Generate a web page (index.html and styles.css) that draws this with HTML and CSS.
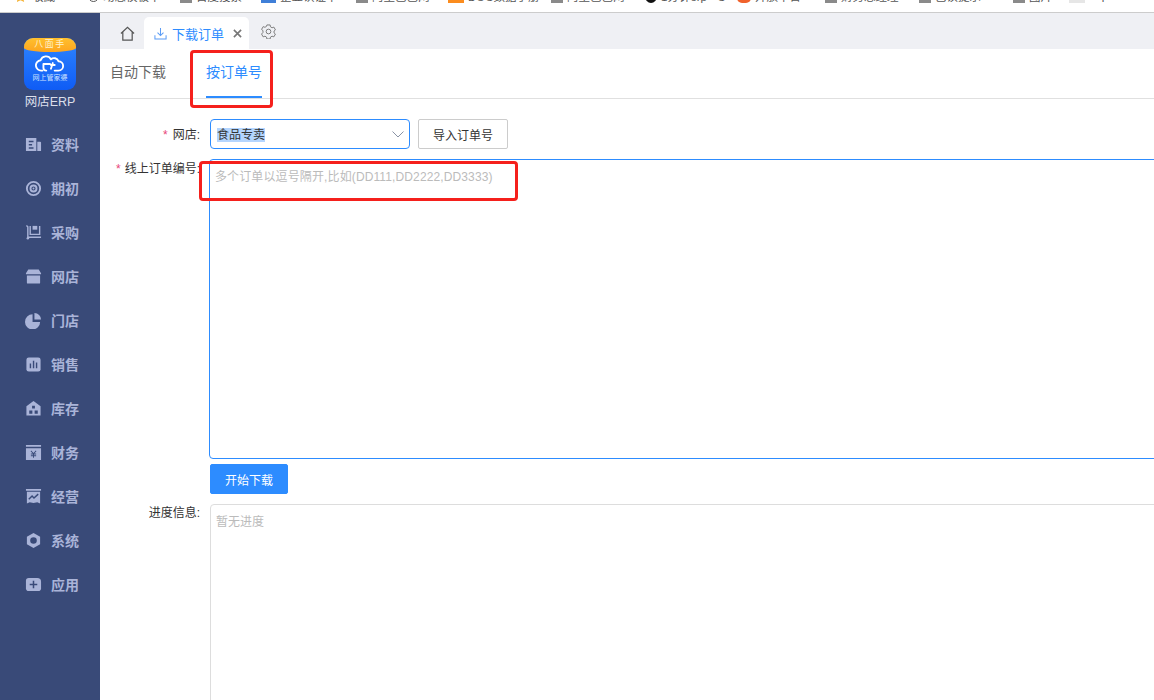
FILE: index.html
```html
<!DOCTYPE html>
<html lang="zh-CN">
<head>
<meta charset="utf-8">
<title>下载订单</title>
<link rel="stylesheet" href="styles.css">
</head>
<body>
<div class="bookmarks">
  <div class="bm"><svg class="bm-ico" viewBox="0 0 12 12"><path class="star" d="M6 0 8 4.500l4 .5-3 3 1 4-4-2-4 2 1-4-3-3 4-.5z"/></svg><span>收藏</span></div>
  <div class="bm"><span class="bm-ring"></span><span>动态模板中</span></div>
  <div class="bm"><span class="bm-box"></span><span>百度搜索</span></div>
  <div class="bm"><span class="bm-box blue"></span><span>企业认证中</span></div>
  <div class="bm"><span class="bm-box"></span><span>阿里巴巴网</span></div>
  <div class="bm"><span class="bm-box orange"></span><span>DOC数据手册</span></div>
  <div class="bm"><span class="bm-box"></span><span>阿里巴巴网</span></div>
  <div class="bm"><span class="bm-box black"></span><span>1分钟erp - C</span></div>
  <div class="bm"><span class="bm-box red"></span><span>开放平台</span></div>
  <div class="bm"><span class="bm-box"></span><span>财务总经理</span></div>
  <div class="bm"><span class="bm-box"></span><span>已读提示</span></div>
  <div class="bm"><span class="bm-box"></span><span>图片</span></div>
  <div class="bm"><span class="bm-box pale"></span><span>https://ss</span></div>
</div>
<div class="app">
  <aside class="sidebar">
    <div class="logo">
      <div class="logo-band">八面手</div>
      <svg class="logo-cloud" viewBox="0 0 32 18"><path d="M8 16H7a5.500 5.500 0 0 1-1-11 6 6 0 0 1 11-1 5 5 0 0 1 8 2 5 5 0 0 1 0 10h-4"/><path d="M9 9h7M9 9v4a3 3 0 0 0 3 3M19 8l-2 6M17 10l4 0"/></svg>
      <div class="logo-name">网上管家婆</div>
    </div>
    <div class="brand">网店ERP</div>
    <nav class="menu">
      <a class="menu-item"><svg class="mi" viewBox="0 0 18 18"><path d="M1 2h11v14H1z M13 6h3a1 1 0 0 1 1 1v9h-4z"/><path class="cut" d="M4 5h5v1.500H4zM4 8.500h3.500V10H4zM4 12h5v1.500H4z"/></svg><span>资料</span></a>
      <a class="menu-item"><svg class="mi" viewBox="0 0 18 18"><circle class="ln" cx="9" cy="9" r="7"/><circle class="ln" cx="9" cy="9" r="3.200"/><circle cx="9" cy="9" r="1"/></svg><span>期初</span></a>
      <a class="menu-item"><svg class="mi" viewBox="0 0 18 18"><path class="ln1" d="M1.500 1.500 3 3v11h14M5.500 2v9h10V2"/><path d="M8 2h5v4H8z"/><circle cx="3" cy="15" r="1.300"/></svg><span>采购</span></a>
      <a class="menu-item"><svg class="mi" viewBox="0 0 18 18"><path d="M3.500 1.500h11l2.500 4v1H1v-1zM2 8h14v7.500a1 1 0 0 1-1 1H3a1 1 0 0 1-1-1z"/></svg><span>网店</span></a>
      <a class="menu-item"><svg class="mi" viewBox="0 0 18 18"><path d="M8 2.500v8h8A8 8 0 1 1 8 2.500z"/><path d="M10 1a7 7 0 0 1 7 7h-7z"/></svg><span>门店</span></a>
      <a class="menu-item"><svg class="mi" viewBox="0 0 18 18"><rect x="1.500" y="1.500" width="15" height="15" rx="2.500"/><path class="cut" d="M5 8h1.500v5H5zM8.300 5h1.500v8H8.300zM11.500 7h1.500v6h-1.500z"/></svg><span>销售</span></a>
      <a class="menu-item"><svg class="mi" viewBox="0 0 18 18"><path d="M9 1 16.500 6.500v10h-15v-10z"/><path class="cut" d="M7.500 6h3v3h-3zM4.500 11h3.300v3.500H4.500zM10.200 11h3.300v3.500h-3.300z"/></svg><span>库存</span></a>
      <a class="menu-item"><svg class="mi" viewBox="0 0 18 18"><path d="M1 1h16v2H1zM1 4.500h16V17H1z"/><path class="cut" d="M6.500 7 9 9.500 11.500 7l.6.6L9.800 10h2v1h-2.300v1h2.300v1H9.500v1.500h-1V13H6.200v-1h2.300v-1H6.200v-1h2L5.900 7.600z"/></svg><span>财务</span></a>
      <a class="menu-item"><svg class="mi" viewBox="0 0 18 18"><path d="M1 1h16v2H1zM2 4h14v12.500L13 15l-4 1-4-1-3 1.500z"/><path class="cutln" d="M4 12l3.500-3.500 2 2L14 6.500"/></svg><span>经营</span></a>
      <a class="menu-item"><svg class="mi" viewBox="0 0 18 18"><path class="hex" fill-rule="evenodd" d="M9 1 16 5v8l-7 4-7-4V5zM9 5.500a3.500 3.500 0 1 0 0 7 3.500 3.500 0 0 0 0-7z"/></svg><span>系统</span></a>
      <a class="menu-item"><svg class="mi" viewBox="0 0 18 18"><path d="M4 2h9a4 4 0 0 1 4 4v7a3 3 0 0 1-3 3H4a3 3 0 0 1-3-3V5a3 3 0 0 1 3-3z"/><path class="cut" d="M8.200 5h1.600v3.200H13v1.600H9.800V13H8.200V9.800H5V8.200h3.200z"/></svg><span>应用</span></a>
    </nav>
  </aside>
  <main class="main">
    <div class="tabbar">
      <svg class="home" viewBox="0 0 16 16"><path d="M1 8 8 1.500 15 8M3 6.500V15h10V6.500"/></svg>
      <div class="tab">
        <svg class="tab-ico" viewBox="0 0 14 14"><path d="M7 1v8M3.800 6 7 9.200 10.200 6M1 9v4h12V9"/></svg>
        <span>下载订单</span>
        <svg class="tab-close" viewBox="0 0 10 10"><path d="M1 1l8 8M9 1 1 9"/></svg>
      </div>
      <svg class="gear" viewBox="0 0 16 16"><path d="M6.300 1h3.400l.4 2 1.700 1 1.900-.7 1.700 3-1.500 1.200v2l1.500 1.200-1.700 3-1.900-.7-1.700 1-.4 2H6.300l-.4-2-1.700-1-1.900.7-1.700-3L2.100 9V7L.6 5.800l1.700-3 1.900.7 1.700-1z"/><circle cx="8" cy="8" r="2.500"/></svg>
    </div>
    <div class="subtabs">
      <div class="subtab">自动下载</div>
      <div class="subtab active">按订单号</div>
    </div>
    <form class="form">
      <div class="row row-shop">
        <label class="label center"><i>*</i>网店:</label>
        <div class="select"><span class="selected">食品专卖</span>
          <svg class="chev" viewBox="0 0 12 7"><path d="M.5.500 6 6 11.500.5"/></svg></div>
        <button type="button" class="btn">导入订单号</button>
      </div>
      <div class="row row-orders">
        <label class="label"><i>*</i>线上订单编号:</label>
        <textarea class="orders" placeholder="多个订单以逗号隔开,比如(DD111,DD2222,DD3333)"></textarea>
      </div>
      <div class="row row-start">
        <span class="label"></span>
        <button type="button" class="btn primary">开始下载</button>
      </div>
      <div class="row">
        <label class="label progress-label">进度信息:</label>
        <div class="progress">暂无进度</div>
      </div>
    </form>
    <div class="mark mark-tab"></div>
    <div class="mark mark-field"></div>
  </main>
</div>
</body>
</html>
```
FILE: styles.css
```css
* { box-sizing: border-box; }
html, body { margin: 0; height: 700px; overflow: hidden; background: #fff; }
body { font-family: "Liberation Sans", "Noto Sans CJK SC", sans-serif; font-size: 12px; color: #333; display: flex; flex-direction: column; }

.bookmarks { height: 13px; flex: none; overflow: hidden; border-bottom: 1px solid #ccc; padding-left: 15px; display: grid; grid-template-columns: 73px 92px 81px 95px 92px 103px 94px 92px 88px 94px 94px 56px 85px; white-space: nowrap; }
.bm { display: flex; align-items: center; gap: 4px; height: 16px; margin-top: -12px; font-size: 11.500px; color: #555; overflow: visible; }
.bm-ico { width: 11px; height: 11px; overflow: visible; flex: none; margin-right: 2px; }
.star { fill: #f5b335; }
.bm-ring { width: 11px; height: 11px; border: 1.500px solid #555; border-radius: 50%; flex: none; margin-top: 1px; }
.bm-box { width: 12px; height: 14px; background: #8a8a8a; flex: none; }
.bm-box.blue { width: 15px; background: #3f7fd8; }
.bm-box.orange { width: 16px; background: #fb8c1e; }
.bm-box.black { background: #111; border-radius: 50%; }
.bm-box.red { width: 14px; background: #f0622c; border-radius: 5px; }
.bm-box.pale { width: 16px; background: #e6e6e6; }

.app { flex: 1; display: flex; min-height: 0; }

.sidebar { width: 100px; flex: none; background: #394a78; padding-top: 25px; display: flex; flex-direction: column; align-items: center; }
.logo { width: 52px; height: 52px; border-radius: 9px; overflow: hidden; background: linear-gradient(#2f86ff, #0f5cf5); display: flex; flex-direction: column; align-items: center; }
.logo-band { width: 52px; height: 14px; flex: none; background: linear-gradient(#ffc02e, #fda51f); border-radius: 0 0 50% 50% / 0 0 4px 4px; color: #fff2cf; font-size: 9px; line-height: 13px; letter-spacing: 1.500px; text-align: center; }
.logo-cloud { width: 30px; height: 18px; margin-top: 3px; flex: none; fill: none; stroke: #fff; stroke-width: 2; stroke-linecap: round; stroke-linejoin: round; }
.logo-name { font-size: 7px; line-height: 10px; margin-top: 0; color: #cfe3ff; white-space: nowrap; }
.brand { margin-top: 4px; line-height: 16px; font-size: 12.500px; color: #dcdfea; }

.menu { width: 100%; margin-top: 12px; display: flex; flex-direction: column; }
.menu-item { height: 44px; padding-left: 25px; display: flex; align-items: center; gap: 9px; font-size: 14px; font-weight: 700; color: #aab4d8; }
.mi { width: 17px; height: 17px; flex: none; fill: #aab4d8; }
.mi .cut { fill: #394a78; }
.mi .ln { fill: none; stroke: #aab4d8; stroke-width: 2; }
.mi .ln1 { fill: none; stroke: #aab4d8; stroke-width: 1.500; }
.mi .cutln { fill: none; stroke: #394a78; stroke-width: 1.500; }

.main { flex: 1; min-width: 0; position: relative; overflow: hidden; }

.tabbar { height: 36px; background: #eff0f4; padding: 4px 0 0 20px; display: flex; align-items: flex-start; }
.home { width: 15px; height: 15px; margin: 9px 9px 0 0; fill: none; stroke: #555; stroke-width: 1.300; flex: none; }
.tab { width: 105px; height: 32px; background: #fff; border-radius: 5px 5px 0 0; padding-left: 10px; display: flex; align-items: center; font-size: 13px; color: #2d8cff; }
.tab-ico { width: 13px; height: 13px; margin-right: 5px; fill: none; stroke: #5b9cf5; stroke-width: 1.100; flex: none; }
.tab-close { width: 9px; height: 9px; margin-left: 9px; fill: none; stroke: #777; stroke-width: 1.800; flex: none; }
.gear { width: 15px; height: 15px; margin: 7px 0 0 12px; fill: none; stroke: #777; stroke-width: 1; flex: none; }

.subtabs { margin-left: 10px; height: 50px; border-bottom: 1px solid #e0e0e0; display: flex; gap: 40px; }
.subtab { height: 49px; line-height: 46px; font-size: 14px; color: #666; }
.subtab.active { color: #2d8cff; border-bottom: 2px solid #2d8cff; height: 49px; }

.form { padding-top: 20px; display: flex; flex-direction: column; }
.row { display: flex; align-items: flex-start; }
.row-orders { margin-top: 10px; }
.row-start { margin-top: 5px; margin-bottom: 10px; }
.row-shop { height: 30px; }
.label { width: 100px; margin-right: 10px; flex: none; text-align: right; line-height: 16px; color: #333; padding-top: 1px; }
.label.center { line-height: 32px; padding-top: 0; }
.label i { font-style: normal; color: #e8457a; margin-right: 5px; }
.row-orders .label { margin-right: 9px; padding-top: 2px; }
.row-orders .label i { margin-right: 4px; }

.select { width: 200px; height: 30px; border: 1px solid #2d8cff; border-radius: 4px; padding: 1px 0 0 6px; display: flex; align-items: center; justify-content: space-between; color: #333; }
.selected { background: #b4d5fe; line-height: 14px; }
.chev { width: 12px; height: 7px; margin-right: 5px; fill: none; stroke: #8a93a5; stroke-width: 1; }

.btn { height: 30px; border: 1px solid #ccc; border-radius: 2px; background: #fff; padding: 0; width: 90px; margin-left: 8px; font: inherit; color: #333; }
.btn.primary { width: 78px; margin-left: 0; background: #2d8cff; border-color: #2d8cff; color: #fff; }

.orders { width: 1000px; height: 300px; flex: none; border: 1px solid #2d8cff; border-radius: 4px; padding: 9px 5px; outline: 0; resize: none; font: inherit; line-height: 16px; letter-spacing: .12px; display: block; }
.orders::placeholder { color: #bbb; opacity: 1; }

.progress { width: 1000px; height: 300px; flex: none; border: 1px solid #ddd; border-radius: 4px; padding: 9px 5px; line-height: 16px; color: #bbb; }

.mark { position: absolute; border: 3px solid #f5201c; border-radius: 4px; pointer-events: none; }
.mark-tab { left: 90px; top: 37px; width: 83px; height: 58px; }
.mark-field { left: 99px; top: 148px; width: 319px; height: 40px; }
```
